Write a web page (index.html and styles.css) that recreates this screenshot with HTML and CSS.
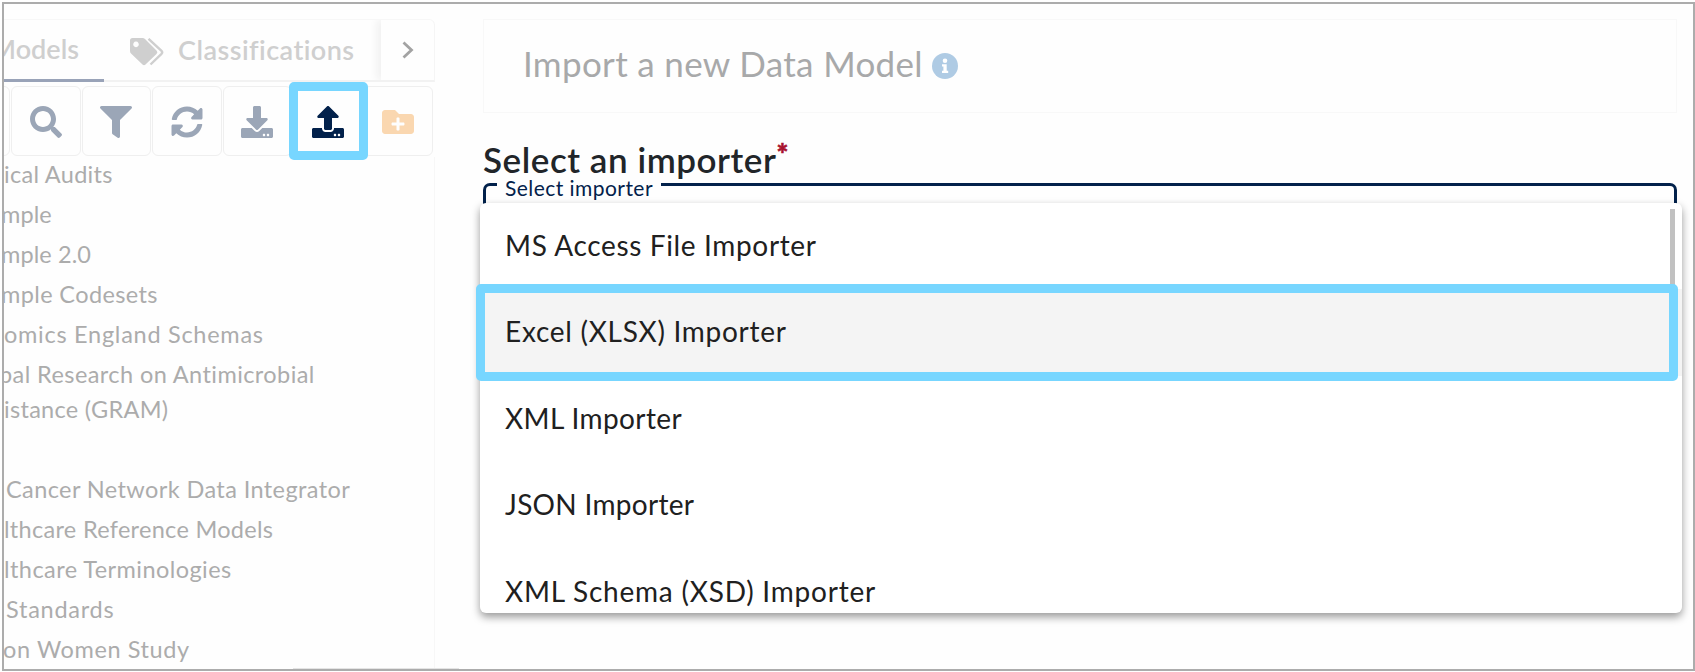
FILE: index.html
```html
<!DOCTYPE html>
<html lang="en">
<head>
<meta charset="utf-8">
<title>Import a new Data Model</title>
<link rel="stylesheet" href="styles.css">
</head>
<body>
<div class="frame">
  <aside class="sidebar">
    <div class="tabs">
      <div class="tab tab-active"><span>Models</span></div>
      <div class="tab tab-class">
        <svg class="tag-icon" viewBox="0 0 34 28"><path fill="#cfcfcf" fill-rule="evenodd" d="M2.500 0H12.500q1.500 0 2.500 1L26.500 12.500q1.800 1.800 0 3.600L15.500 26.500q-1.500 1.300-3 0L1 15.500Q0 14.500 0 13V2.500Q0 0 2.500 0ZM6 3.600a2.800 2.800 0 1 0 .01 0Z"/><path fill="none" stroke="#cfcfcf" stroke-width="2.400" d="M18.500 0.800 31.500 12.800q1.400 1.500 0 3L20.500 26.500"/></svg>
        <span class="tab-label">Classifications</span>
      </div>
      <div class="tab-next"><svg viewBox="0 0 12 18"><path d="M1.500 1.500 9.500 9 1.500 16.500" fill="none" stroke="#a3a3a3" stroke-width="2.800"/></svg></div>
    </div>
    <div class="toolbar">
      <div class="tool tool-cut"></div>
      <div class="tool"><svg viewBox="0 0 512 512"><path d="M505 442.700 405.300 343c-4.500-4.500-10.600-7-17-7H372c27.600-35.300 44-79.700 44-128C416 93.100 322.900 0 208 0S0 93.100 0 208s93.100 208 208 208c48.300 0 92.700-16.400 128-44v16.300c0 6.400 2.500 12.500 7 17l99.700 99.700c9.400 9.400 24.600 9.400 33.900 0l28.300-28.300c9.400-9.400 9.400-24.600.1-34zM208 336c-70.700 0-128-57.200-128-128 0-70.700 57.200-128 128-128 70.700 0 128 57.200 128 128 0 70.700-57.200 128-128 128z"/></svg></div>
      <div class="tool"><svg viewBox="0 0 512 512"><path d="M487.976 0H24.028C2.710 0-8.047 25.866 7.058 40.971L192 225.941V432c0 7.831 3.821 15.170 10.237 19.662l80 55.980C298.020 518.690 320 507.493 320 487.980V225.941l184.947-184.970C520.021 25.896 509.338 0 487.976 0z"/></svg></div>
      <div class="tool"><svg viewBox="0 0 512 512"><path d="M370.720 133.280C339.458 104.008 298.888 87.962 255.848 88c-77.458.068-144.328 53.178-162.791 126.850-1.344 5.363-6.122 9.150-11.651 9.150H24.103c-7.498 0-13.194-6.807-11.807-14.176C33.933 94.924 134.813 8 256 8c66.448 0 126.791 26.136 171.315 68.685L463.030 40.970C478.149 25.851 504 36.559 504 57.941V192c0 13.255-10.745 24-24 24H345.941c-21.382 0-32.090-25.851-16.971-40.971l41.750-41.749zM32 296h134.059c21.382 0 32.090 25.851 16.971 40.971l-41.750 41.750c31.262 29.273 71.835 45.319 114.876 45.280 77.418-.070 144.315-53.144 162.787-126.849 1.344-5.363 6.122-9.150 11.651-9.150h57.304c7.498 0 13.194 6.807 11.807 14.176C478.067 417.076 377.187 504 256 504c-66.448 0-126.791-26.136-171.315-68.685L48.970 471.030C33.851 486.149 8 475.441 8 454.059V320c0-13.255 10.745-24 24-24z"/></svg></div>
      <div class="tool"><svg viewBox="0 0 512 512"><path d="M216 0h80c13.300 0 24 10.700 24 24v168h87.700c17.800 0 26.700 21.500 14.100 34.100L269.700 378.300c-7.500 7.500-19.800 7.500-27.300 0L90.100 226.100c-12.600-12.600-3.700-34.100 14.100-34.100H192V24c0-13.300 10.700-24 24-24zm296 376v112c0 13.300-10.700 24-24 24H24c-13.300 0-24-10.700-24-24V376c0-13.300 10.700-24 24-24h146.700l49 49c20.100 20.100 52.500 20.100 72.600 0l49-49H488c13.300 0 24 10.700 24 24zm-124 88c0-11-9-20-20-20s-20 9-20 20 9 20 20 20 20-9 20-20zm64 0c0-11-9-20-20-20s-20 9-20 20 9 20 20 20 20-9 20-20z"/></svg></div>
      <div class="tool tool-upload"><svg viewBox="0 0 512 512"><path d="M296 384h-80c-13.300 0-24-10.700-24-24V192h-87.700c-17.800 0-26.700-21.500-14.100-34.100L242.300 5.700c7.500-7.500 19.800-7.500 27.300 0l152.200 152.200c12.600 12.600 3.700 34.100-14.100 34.100H320v168c0 13.300-10.700 24-24 24zm216-8v112c0 13.300-10.700 24-24 24H24c-13.300 0-24-10.700-24-24V376c0-13.300 10.700-24 24-24h136v8c0 30.900 25.100 56 56 56h80c30.900 0 56-25.100 56-56v-8h136c13.300 0 24 10.700 24 24zm-124 88c0-11-9-20-20-20s-20 9-20 20 9 20 20 20 20-9 20-20zm64 0c0-11-9-20-20-20s-20 9-20 20 9 20 20 20 20-9 20-20z"/></svg><div class="tool-highlight"></div></div>
      <div class="tool tool-folder"><svg viewBox="0 0 512 512"><path fill-rule="evenodd" d="M464 128H272l-64-64H48C21.490 64 0 85.490 0 112v288c0 26.510 21.490 48 48 48h416c26.510 0 48-21.490 48-48V176c0-26.510-21.490-48-48-48zm-105 168c0 8.840-7.160 16-16 16h-63v63c0 8.840-7.160 16-16 16h-16c-8.840 0-16-7.160-16-16v-63h-63c-8.840 0-16-7.160-16-16v-16c0-8.840 7.160-16 16-16h63v-63c0-8.840 7.160-16 16-16h16c8.840 0 16 7.160 16 16v63h63c8.840 0 16 7.160 16 16v16z"/></svg></div>
    </div>
    <div class="tree">
      <div class="node n-audits">ical Audits</div>
      <div class="node n-example">mple</div>
      <div class="node n-example">mple 2.0</div>
      <div class="node n-codesets">mple Codesets</div>
      <div class="node n-genomics">omics England Schemas</div>
      <div class="node node-tall"><span class="n-global">bal Research on Antimicrobial</span><br>istance (GRAM)</div>
      <div class="node n-cancer">Cancer Network Data Integrator</div>
      <div class="node n-models">lthcare Reference Models</div>
      <div class="node n-terms">lthcare Terminologies</div>
      <div class="node n-standards">Standards</div>
      <div class="node n-women">on Women Study</div>
    </div>
  </aside>
  <main class="main">
    <header class="banner"><h1 class="title">Import a new Data Model</h1>
      <svg class="info" viewBox="0 0 26 26"><circle cx="13" cy="13" r="13" fill="#afcbe4"/><circle cx="13" cy="7.800" r="2.300" fill="#fff"/><path fill="#fff" d="M10 11.200h4.700v6.500h1.500v2.300H10v-2.300h1.400v-4.200H10z"/></svg></header>
    <h2 class="question"><span>Select an importer</span><span class="required">*</span></h2>
    <div class="field">
      <div class="edge-left"></div><span class="label">Select importer</span><div class="edge-right"></div>
      <div class="menu">
        <div class="option o-access">MS Access File Importer</div>
        <div class="option option-active">Excel (XLSX) Importer</div>
        <div class="option o-xml">XML Importer</div>
        <div class="option o-json">JSON Importer</div>
        <div class="option o-xsd">XML Schema (XSD) Importer</div>
        <div class="scrollbar"></div>
      </div>
      <div class="option-highlight"></div>
    </div>
  </main>
  <div class="frame-fade"></div>
</div>
</body>
</html>
```
FILE: styles.css
```css
* { box-sizing: border-box; }
body { margin: 0; background: #fff; font-family: Lato, "Open Sans", sans-serif; overflow: hidden; }
.frame { position: relative; width: 1693px; height: 669px; margin: 2px 0 0 2px; border: 2px solid #acacac; background: #fefefe; display: flex; overflow: hidden; }
.frame-fade { position: absolute; left: 289px; bottom: 0; width: 166px; height: 1px; background: #e4e4e4; }
.sidebar { width: 431px; padding-top: 15px; flex: none; }
.tabs { display: flex; height: 63px; border-top: 1px solid #f7f7f7; border-right: 1px solid #f5f5f5; border-bottom: 2px solid #f2f2f2; border-top-right-radius: 6px; }
.tab { font-size: 27px; font-weight: 600; color: #cfcfcf; line-height: 58px; white-space: nowrap; }
.tab-active { width: 100px; height: 62px; border-bottom: 3px solid #99a3b8; display: flex; justify-content: flex-end; padding-right: 25px; overflow: hidden; }
.tab-class { display: flex; align-items: center; padding-left: 26px; gap: 14px; width: 277px; height: 60px; }
.tab-label { letter-spacing: 0.45px; }
.tag-icon { width: 34px; height: 28px; position: relative; top: 2px; }
.tab-next { flex: 1; display: flex; align-items: center; justify-content: center; box-shadow: -4px 0 8px #f0f0f0; clip-path: inset(0 0 0 -20px); }
.tab-next svg { width: 12px; height: 18px; }
.toolbar { display: flex; gap: 1px; height: 75px; padding-top: 4px; margin-left: -63px; }
.tool { width: 69.400px; height: 70px; flex: none; border: 1px solid #efefef; border-radius: 6px; display: flex; align-items: center; justify-content: center; position: relative; }
.tool svg { width: 32px; height: 32px; fill: #9ba6b7; position: relative; top: 1px; }
.tool-upload svg { fill: #02214b; }
.tool-folder svg { fill: #fad7b0; }
.tool-highlight { position: absolute; left: -5px; top: -5px; width: 79px; height: 78px; border: 9px solid #77d6ff; border-radius: 5px; z-index: 2; }
.tree { font-size: 23.500px; color: #acacac; white-space: nowrap; line-height: 35px; border-right: 1px solid #f7f7f7; height: 520px; letter-spacing: 0.3px; }
.node { height: 40px; }
.node-tall { height: 115px; }
.n-example { margin-left: -3px; letter-spacing: 0.1px; }
.n-codesets { margin-left: -3px; letter-spacing: 0.38px; }
.n-genomics { letter-spacing: 0.73px; }
.n-global { margin-left: -5px; letter-spacing: 0.42px; }
.n-cancer { margin-left: 2px; letter-spacing: 0.4px; }
.n-terms { letter-spacing: 0.44px; }
.n-standards { margin-left: 2px; letter-spacing: 0.75px; }
.n-women { margin-left: -1px; letter-spacing: 0.6px; }
.main { flex: 1; padding: 15px 16px 0 48px; }
.banner { height: 94px; border: 1px solid #f8f8f8; display: flex; align-items: center; padding-left: 39px; gap: 9px; }
.title { margin: 0 0 7px; font-size: 35px; font-weight: 400; color: #a8a9aa; letter-spacing: 0.33px; }
.info { width: 26px; height: 26px; }
.question { margin: 24px 0 2px; font-size: 35px; line-height: 44px; font-weight: 600; color: #212529; display: flex; letter-spacing: 0.55px; }
.required { color: #a8122f; font-size: 28px; line-height: 32px; font-weight: 900; -webkit-text-stroke: 0.600px #a8122f; }
.field { display: flex; position: relative; color: #02214b; height: 40px; }
.edge-left { width: 14px; height: 40px; border: 3px solid #02214b; border-width: 3px 0 0 3px; border-radius: 7px 0 0 0; }
.edge-right { flex: 1; height: 40px; border: 3px solid #02214b; border-width: 3px 3px 0 0; border-radius: 0 7px 0 0; }
.label { font-size: 21px; line-height: 24px; margin: -7px 8px 0; letter-spacing: 0.45px; }
.menu { position: absolute; left: -3px; top: 20px; width: 1202px; height: 410px; background: #fff; border-radius: 6px; overflow: hidden; color: #202020; font-size: 28px; box-shadow: 0 4px 8px #0006; }
.option { height: 86.400px; line-height: 84px; padding-left: 25px; }
.option-active { background: #f4f4f4; letter-spacing: 0.72px; }
.o-access { letter-spacing: 0.64px; }
.o-xml { letter-spacing: 0.4px; }
.o-json { letter-spacing: 0.3px; }
.o-xsd { letter-spacing: 0.78px; }
.scrollbar { position: absolute; right: 7px; top: 6px; width: 5px; height: 80px; background: #c1c1c1; }
.option-highlight { position: absolute; left: -7px; top: 101px; width: 1202px; height: 97px; border: 9px solid #77d6ff; border-radius: 5px; }
```
